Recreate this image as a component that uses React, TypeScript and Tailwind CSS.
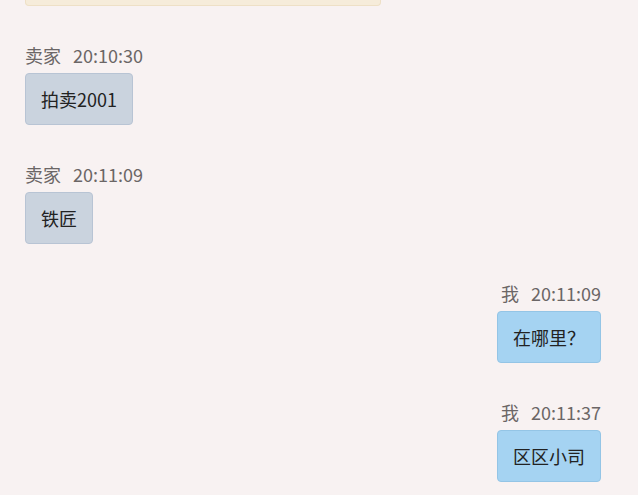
import React from 'react';

type Msg = { name: string; time: string; text: string; mine: boolean };

const messages: Msg[] = [
  { name: '卖家', time: '20:10:30', text: '拍卖2001', mine: false },
  { name: '卖家', time: '20:11:09', text: '铁匠', mine: false },
  { name: '我', time: '20:11:09', text: '在哪里？', mine: true },
  { name: '我', time: '20:11:37', text: '区区小司', mine: true },
];

export default function App() {
  return (
    <div
      className="w-[638px] h-[495px] overflow-hidden bg-[#f8f2f2] pl-[25px] pr-[37px]"
      style={{ fontFamily: '"Microsoft YaHei", "Noto Sans CJK SC", sans-serif' }}
    >
      {/* cut-off system message */}
      <div className="w-[356px] h-[6px] bg-[#f6ecda] border-x border-b border-[#eee0c6] rounded-b-[4px]" />

      <div className="flex flex-col pt-[37px] gap-[37px]">
        {messages.map((m, i) => (
          <div key={i} className={`flex flex-col gap-[6px] ${m.mine ? 'items-end' : 'items-start'}`}>
            <div className="flex gap-[12px] text-[18px] leading-[24px] text-[#6b6666]">
              <span>{m.name}</span>
              <span>{m.time}</span>
            </div>
            <div
              className={`px-[15px] py-[13px] text-[18px] leading-[24px] text-[#222] rounded-[4px] border ${
                m.mine ? 'bg-[#a5d3f2] border-[#94c5e6]' : 'bg-[#cad3de] border-[#b8c4d4]'
              }`}
            >
              {m.text}
            </div>
          </div>
        ))}
      </div>
    </div>
  );
}
